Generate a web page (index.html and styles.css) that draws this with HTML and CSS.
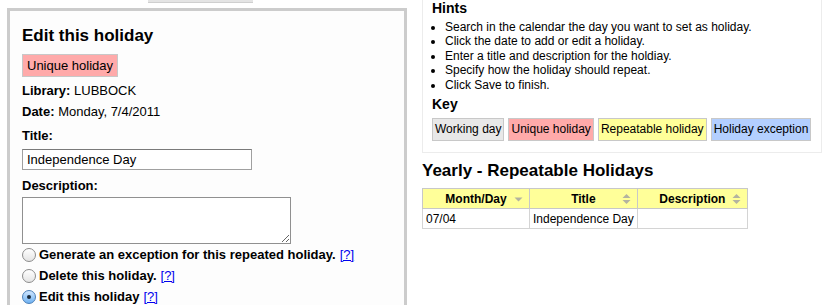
FILE: index.html
```html
<!DOCTYPE html>
<html>
<head>
<meta charset="utf-8">
<link rel="stylesheet" href="styles.css">
</head>
<body>
<div class="page">
  <div class="left-col">
    <div class="top-btn"></div>
    <div class="panel">
      <h3 class="panel-title">Edit this holiday</h3>
      <div class="badge unique">Unique holiday</div>
      <p class="line"><b>Library:</b> LUBBOCK</p>
      <p class="line"><b>Date:</b> Monday, 7/4/2011</p>
      <label class="field-label">Title:</label>
      <input class="text-input" type="text" value="Independence Day">
      <label class="field-label desc-label">Description:</label>
      <textarea class="text-area"></textarea>
      <div class="radio-row"><span class="radio"></span><b>Generate an exception for this repeated holiday.</b> <a href="#" class="help">[?]</a></div>
      <div class="radio-row"><span class="radio"></span><b>Delete this holiday.</b> <a href="#" class="help">[?]</a></div>
      <div class="radio-row"><span class="radio checked"></span><b>Edit this holiday</b> <a href="#" class="help">[?]</a></div>
    </div>
  </div>
  <div class="right-col">
    <div class="hints">
      <h4 class="hints-title">Hints</h4>
      <ul class="hint-list">
        <li>Search in the calendar the day you want to set as holiday.</li>
        <li>Click the date to add or edit a holiday.</li>
        <li>Enter a title and description for the holdiay.</li>
        <li>Specify how the holiday should repeat.</li>
        <li>Click Save to finish.</li>
      </ul>
      <h4 class="key-title">Key</h4>
      <div class="key-row">
        <span class="badge working">Working day</span>
        <span class="badge unique">Unique holiday</span>
        <span class="badge repeatable">Repeatable holiday</span>
        <span class="badge exception">Holiday exception</span>
      </div>
    </div>
    <h3 class="table-title">Yearly - Repeatable Holidays</h3>
    <table class="holidays">
      <thead>
        <tr>
          <th class="c1">Month/Day <svg class="sort" width="9" height="12" viewBox="0 0 9 12"><path d="M0.5 4.5 L8.5 4.5 L4.5 8.5 Z" fill="#b3b3a0"/></svg></th>
          <th class="c2">Title <svg class="sort" width="9" height="12" viewBox="0 0 9 12"><path d="M0.5 5 L8.5 5 L4.5 1 Z M0.5 7 L8.5 7 L4.5 11 Z" fill="#b3b3a0"/></svg></th>
          <th class="c3">Description <svg class="sort" width="9" height="12" viewBox="0 0 9 12"><path d="M0.5 5 L8.5 5 L4.5 1 Z M0.5 7 L8.5 7 L4.5 11 Z" fill="#b3b3a0"/></svg></th>
        </tr>
      </thead>
      <tbody>
        <tr><td>07/04</td><td>Independence Day</td><td></td></tr>
      </tbody>
    </table>
  </div>
</div>
</body>
</html>
```

FILE: styles.css
```css
html, body {
  margin: 0;
  padding: 0;
  background: #ffffff;
  font-family: "Liberation Sans", Arial, sans-serif;
  color: #000;
  font-size: 13px;
}
.page {
  display: flex;
  align-items: flex-start;
  height: 305px;
  overflow: hidden;
}
.left-col {
  margin-left: 7px;
  width: 400px;
  flex: none;
}
.top-btn {
  margin-left: 141px;
  width: 105px;
  height: 2px;
  background: #e4e4e4;
  border-bottom: 1px solid #cfcfcf;
  margin-bottom: 5px;
}
.panel {
  border: 3px solid #cccccc;
  background: #fdfdfd;
  padding: 15px 12px 20px 12px;
  height: 400px;
}
.panel-title {
  margin: 0 0 8px 0;
  font-size: 17px;
  font-weight: bold;
  line-height: 20px;
}
.badge {
  display: inline-block;
  border: 1px solid #c8c8c8;
  padding: 3px 4px;
  font-size: 13px;
  line-height: 15px;
  white-space: nowrap;
}
.unique { background: #ffaaaa; }
.working { background: #e8e8e8; }
.repeatable { background: #ffff99; }
.exception { background: #b3cfff; }
.panel .badge {
  margin-bottom: 6px;
}
.line {
  margin: 0 0 5px 0;
  line-height: 16px;
}
.field-label {
  display: block;
  font-weight: bold;
  line-height: 16px;
  margin: 8px 0 5px 0;
}
.desc-label {
  margin-bottom: 3px;
}
.text-input {
  display: block;
  box-sizing: border-box;
  width: 230px;
  height: 21px;
  border: 1px solid #a0a0a0;
  border-top-color: #7a7a7a;
  padding: 1px 4px;
  margin: 0;
  font-family: "Liberation Sans", Arial, sans-serif;
  font-size: 13px;
  background: #fff;
}
.text-area {
  display: block;
  box-sizing: border-box;
  width: 269px;
  height: 47px;
  border: 1px solid #909090;
  margin: 0;
  padding: 2px;
  resize: both;
  background: #fff;
}
.radio-row {
  display: flex;
  align-items: center;
  height: 21px;
  white-space: nowrap;
}
.radio-row b {
  margin-right: 4px;
}
.radio {
  border-radius: 50%;
  border: 1px solid #8c8c8c;
  background: linear-gradient(#ffffff, #e4e4e4);
  margin-right: 3px;
  flex: none;
  position: relative;
  box-sizing: border-box;
  width: 14px;
  height: 14px;
}
.radio.checked {
  background: linear-gradient(#cfe6ff, #6fb2f2);
  border-color: #4a7fb8;
}
.radio.checked::after {
  content: "";
  position: absolute;
  left: 4px;
  top: 4px;
  width: 4px;
  height: 4px;
  border-radius: 50%;
  background: #1a2a3a;
}
.help {
  color: #0000ee;
  text-decoration: underline;
}
.right-col {
  margin-left: 15px;
  width: 400px;
  flex: none;
}
.hints {
  border: 1px solid #ececec;
  border-top: none;
  padding: 0 9px 11px 9px;
  background: #fff;
}
.hints-title, .key-title {
  margin: 0;
  font-size: 14px;
  font-weight: bold;
  line-height: 17px;
}
.hint-list {
  margin: 3px 0 4px 0;
  padding-left: 13px;
  font-size: 12px;
  line-height: 14.4px;
}
.key-title {
  margin-bottom: 5px;
}
.key-row {
  display: flex;
  gap: 4px;
}
.key-row .badge {
  font-size: 12px;
  padding: 3px 2px;
}
.table-title {
  margin: 8px 0 7px 0;
  font-size: 17px;
  font-weight: bold;
  line-height: 20px;
}
.holidays {
  border-collapse: collapse;
  font-size: 12px;
  width: 326px;
  border: 1px solid #c8c8c8;
}
.holidays th {
  background: #ffff99;
  border: 1px solid #c8c8c8;
  font-weight: bold;
  height: 19px;
  padding: 0 4px;
  text-align: center;
  position: relative;
  white-space: nowrap;
}
.holidays th.c1 { width: 98px; }
.holidays th.c2 { width: 93px; }
.sort {
  position: absolute;
  right: 6px;
  top: 4px;
}
.holidays td {
  border: 1px solid #d4d4d4;
  padding: 0 3px;
  height: 19px;
  line-height: 14px;
  white-space: nowrap;
}
```
